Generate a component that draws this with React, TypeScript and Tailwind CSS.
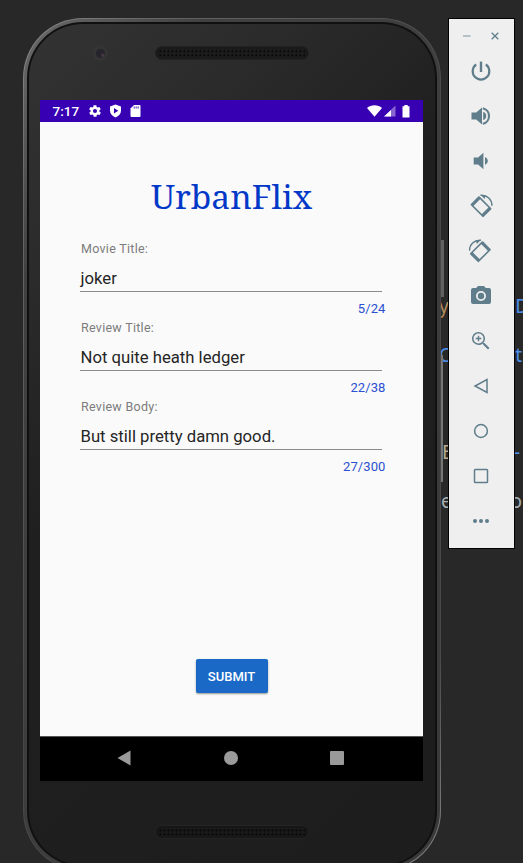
import React from "react";

const SLATE = "#607d8b";

function Speaker({ dark }: { dark?: boolean }) {
  return (
    <svg width="154" height="14" viewBox="0 0 154 14">
      <defs>
        <pattern id={dark ? "holesB" : "holesA"} width="4" height="4" patternUnits="userSpaceOnUse">
          <rect width="4" height="4" fill={dark ? "#191919" : "#1c1c1c"} />
          <circle cx="1.4" cy="1.4" r="1.1" fill="#080808" />
        </pattern>
      </defs>
      <rect x="0.5" y="0.5" width="153" height="13" rx="6.5" fill={dark ? "#161616" : "#1a1a1a"} stroke={dark ? "#242424" : "#222"} />
      <rect x="4" y="2" width="146" height="10" rx="4" fill={dark ? "url(#holesB)" : "url(#holesA)"} />
    </svg>
  );
}

function StatusBar() {
  return (
    <div className="flex h-[22px] items-center bg-[#3700b3] pl-[12.5px] pr-[13.5px] text-white">
      <span className="w-[35.5px] pt-px text-[13.5px] font-medium leading-[21px]">7:17</span>
      <svg width="14" height="14" viewBox="0 0 24 24" fill="currentColor">
        <path d="M19.4 13c.1-.3.1-.6.1-1s0-.7-.1-1l2.1-1.6c.2-.2.3-.4.1-.7l-2-3.4c-.1-.3-.4-.3-.6-.3l-2.5 1c-.5-.4-1.100-.7-1.700-1l-.4-2.600c0-.2-.2-.4-.5-.4h-4c-.2 0-.4.2-.5.4l-.4 2.600c-.6.3-1.200.6-1.700 1l-2.500-1c-.2 0-.5 0-.6.3l-2 3.400c-.1.3-.1.5.1.7L4.600 11c0 .3-.1.600-.1 1s0 .7.1 1l-2.100 1.600c-.2.2-.3.4-.1.7l2 3.400c.1.3.4.3.6.3l2.500-1c.5.4 1.100.7 1.700 1l.4 2.600c0 .2.2.4.5.4h4c.2 0 .4-.2.5-.4l.4-2.600c.6-.3 1.200-.6 1.700-1l2.500 1c.2 0 .5 0 .6-.3l2-3.400c.1-.3.1-.5-.1-.7zM12 15.500a3.500 3.500 0 110-7 3.500 3.500 0 010 7z" />
      </svg>
      <svg className="ml-[7px]" width="13" height="14" viewBox="0 0 13 14">
        <path d="M6.500 .5l5.500 2v4.200c0 3-2.300 5.500-5.500 6.800C3.300 12.200 1 9.700 1 6.700V2.500z" fill="#fff" />
        <path d="M5 4l4.200 2.800L5 9.600z" fill="#3700b3" />
      </svg>
      <svg className="ml-2" width="11" height="12" viewBox="0 0 11 12">
        <path d="M4 0h5.500a1 1 0 011 1v10a1 1 0 01-1 1h-8a1 1 0 01-1-1V3.500z" fill="#fff" />
        <path d="M4.200 1.500v2M6.200 1.500v2M8.200 1.500v2" stroke="#3700b3" strokeWidth="0.9" />
      </svg>
      <div className="ml-auto flex items-center">
        <svg width="15" height="12" viewBox="0 0 15 12"><path d="M0 3C4-.8 11-.8 15 3L7.500 11.800z" fill="#fff" /></svg>
        <svg className="ml-[1.5px]" width="12" height="12" viewBox="0 0 12 12">
          <path d="M11.500 .5v11H0z" fill="#fff" fillOpacity=".4" /><path d="M7 5v6.500H0z" fill="#fff" />
        </svg>
        <svg className="ml-[6px]" width="8" height="13" viewBox="0 0 8 13"><path d="M2.300 0h3.400v1.300H7.500V12a.6.6 0 01-.6.6H1.100A.6.6 0 01.5 12V1.300h1.800z" fill="#fff" /></svg>
      </div>
    </div>
  );
}

function Field({ label, value, count }: { label: string; value: string; count: string }) {
  return (
    <div className="flex h-[79px] flex-col">
      <label className="ml-px h-4 text-[12.5px] leading-4 tracking-[0.28px] text-[#7c7c7c]">{label}</label>
      <div className="mt-[9px] flex h-[26px] w-[302px] items-start border-b border-[#8b8b8b] text-[16.7px] leading-[26px] text-[#252525]">
        <span className="ml-[0.5px] whitespace-nowrap">{value}</span>
      </div>
      <span className="mt-[9px] text-right text-[13px] leading-4 tracking-[0.1px] text-[#2a4fd0]">{count}</span>
    </div>
  );
}

function Screen() {
  return (
    <div className="flex h-[681px] w-[383px] flex-col bg-[#fafafa]">
      <StatusBar />
      <div className="flex flex-1 flex-col items-center">
        <h1 className="mt-[50px] h-12 whitespace-nowrap font-['Noto_Serif','Droid_Serif','DejaVu_Serif',serif] text-[33.5px] leading-[48px] text-[#0238c8]">UrbanFlix</h1>
        <div className="ml-10 mt-[21px] w-[305.5px] self-start">
          <Field label="Movie Title:" value="joker" count="5/24" />
          <Field label="Review Title:" value="Not quite heath ledger" count="22/38" />
          <Field label="Review Body:" value="But still pretty damn good." count="27/300" />
        </div>
        <button className="mb-[43px] mt-auto h-[34px] w-[72px] rounded-[2px] bg-[#1b69c7] pt-px text-[13px] font-medium text-white shadow-[0_1px_2px_rgba(0,0,0,0.4)]">SUBMIT</button>
      </div>
      <div className="flex h-[45px] items-center justify-between border-t border-[#555] bg-black pb-[2px] pl-[77px] pr-[79px]">
        <svg width="14" height="16" viewBox="0 0 14 16"><path d="M13.500 .5v15L.5 8z" fill="#9a9a9a" /></svg>
        <div className="size-[14px] rounded-full bg-[#9a9a9a]" />
        <div className="size-[14px] rounded-[1px] bg-[#9a9a9a]" />
      </div>
    </div>
  );
}

function Phone() {
  return (
    <div className="absolute left-[23px] top-[18px] h-[853px] w-[418px] rounded-[60px] bg-[linear-gradient(125deg,#8a8a8a_0%,#666_12%,#484646_50%,#4a4848_85%,#888_100%)] p-px">
      <div className="h-full rounded-[59px] bg-[linear-gradient(125deg,#6a6a6a_0%,#414040_18%,#3a3939_100%)] p-[3px]">
        <div className="h-full rounded-[56px] bg-[#101010] p-[2px]">
          <div className="flex h-full flex-col items-start rounded-[54px] bg-[linear-gradient(135deg,#333334_0%,#2b2b2b_20%,#1f1f1f_42%,#1d1d1d_100%)] pl-[11px]">
            <div className="flex h-[76px] w-full pt-[22px]">
              <div className="ml-[52px] mt-[-1px] flex size-4 items-center justify-center rounded-full bg-[#343434]">
                <div className="size-[9px] rounded-full bg-[radial-gradient(circle_at_75%_70%,#58404a_0%,#29252f_25%,#202027_100%)]" />
              </div>
              <div className="ml-[47px]"><Speaker /></div>
            </div>
            <Screen />
            <div className="ml-[115px] mt-[44px]"><Speaker dark /></div>
          </div>
        </div>
      </div>
    </div>
  );
}

function Tool({ children }: { children: React.ReactNode }) {
  return (
    <button className="flex h-[45px] w-full items-center justify-center pr-[2px]">
      <svg width="24" height="24" viewBox="0 0 24 24" fill={SLATE}>{children}</svg>
    </button>
  );
}

function RotateGlyph() {
  return (
    <>
      <path transform="translate(12 12.7) rotate(45)" fillRule="evenodd" d="M-8.100-6.200H8.100a1 1 0 011 1V5.200a1 1 0 01-1 1H-8.100a1 1 0 01-1-1V-5.200a1 1 0 011-1zM-5.900-4.600V4.600H5.900V-4.600z" />
      <path d="M11.500 1.300C18.500 .8 22.900 5.500 23 11.800" fill="none" stroke={SLATE} strokeWidth="1.4" />
      <path d="M11.500 .8l5 1-1 3.200z" />
    </>
  );
}

function Toolbar() {
  return (
    <div className="absolute left-[448px] top-[18px] flex h-[531px] w-[67px] flex-col border border-black bg-[#efefef]">
      <div className="flex h-[29px] items-end justify-between pl-[14px] pr-[15px]">
        <svg width="8" height="20" viewBox="0 0 8 20"><path d="M0 8h7.500" stroke="#9fb1ba" strokeWidth="1.5" /></svg>
        <svg width="8" height="20" viewBox="0 0 8 20"><path d="M.7 4.700l6.600 6.600m0-6.600l-6.600 6.600" stroke={SLATE} strokeWidth="1.3" /></svg>
      </div>
      <Tool>
        <path d="M12 2.600v10.400" fill="none" stroke={SLATE} strokeWidth="2.4" />
        <path d="M7.200 5.500a8.300 8.300 0 109.600 0" fill="none" stroke={SLATE} strokeWidth="2.2" />
      </Tool>
      <Tool><path d="M2.500 8.500v7h4.700l5.800 5V3.500l-5.800 5zM17.200 12a4.500 4.500 0 00-3-4.200v8.400a4.500 4.500 0 003-4.200z" /><path d="M13.800 4.200a8 8 0 010 15.600" fill="none" stroke={SLATE} strokeWidth="2.1" /></Tool>
      <Tool><path d="M18.900 12A4.500 4.500 0 0016 7.970v8.050A4.480 4.480 0 0018.900 12zM4.700 8.600v6.800h4.400l5.300 4.800V3.800L9.100 8.600z" /></Tool>
      <Tool><RotateGlyph /></Tool>
      <Tool><g transform="translate(23.4 0) scale(-1 1)"><RotateGlyph /></g></Tool>
      <Tool><circle cx="12" cy="12" r="3.200" /><path d="M9 2L7.170 4H4a2 2 0 00-2 2v12a2 2 0 002 2h16a2 2 0 002-2V6a2 2 0 00-2-2h-3.170L15 2H9zm3 15a5 5 0 110-10 5 5 0 010 10z" /></Tool>
      <Tool><path d="M15.500 14h-.79l-.28-.27A6.500 6.500 0 109.500 16c1.610 0 3.090-.59 4.230-1.570l.27.28v.79l5 4.990L20.490 19l-4.990-5zm-6 .5a5 5 0 110-10 5 5 0 010 10zM12.300 8.800h-2.100V6.700H8.800v2.100H6.700v1.400h2.100v2.100h1.400v-2.100h2.100z" /></Tool>
      <Tool><path d="M18 5.500v13L6 12z" fill="none" stroke={SLATE} strokeWidth="1.5" /></Tool>
      <Tool><circle cx="12" cy="12" r="6.400" fill="none" stroke={SLATE} strokeWidth="1.5" /></Tool>
      <Tool><rect x="5.500" y="5.500" width="13" height="13" rx=".8" fill="none" stroke={SLATE} strokeWidth="1.5" /></Tool>
      <Tool><circle cx="6" cy="12" r="2" /><circle cx="12" cy="12" r="2" /><circle cx="18" cy="12" r="2" /></Tool>
    </div>
  );
}

export default function App() {
  return (
    <main className="relative h-[863px] w-[523px] overflow-hidden bg-[#282828] font-['Roboto','Liberation_Sans',sans-serif]">
      <div className="absolute left-[439px] top-[293px] flex w-[84px] flex-col font-['Noto_Sans',sans-serif] text-[19px] leading-[26px]">
        <div className="flex h-[49px] justify-between"><span className="text-[#b08b5c]">y</span><span className="mr-[-6px] text-[#4b8de8]">D</span></div>
        <div className="flex h-[97px] justify-between text-[#4b8de8]"><span>C</span><span className="mr-px">t</span></div>
        <div className="flex h-[49px] justify-between"><span className="ml-[3px] text-[#b8a98d]">E</span><span className="mr-[3px] text-[#4b8de8]">-</span></div>
        <div className="flex justify-between text-[#a7b0b5]"><span className="ml-[2px]">e</span><span className="mr-[1px]">o</span></div>
      </div>
      <div className="absolute left-[441px] top-[240px] h-[57px] w-[3px] bg-[#606060]" />
      <div className="absolute left-[441px] top-[355px] h-[127px] w-[2px] bg-[#777]" />
      <div className="absolute left-[440px] top-[482px] h-[30px] w-px bg-[#555]" />
      <Phone />
      <Toolbar />
    </main>
  );
}
